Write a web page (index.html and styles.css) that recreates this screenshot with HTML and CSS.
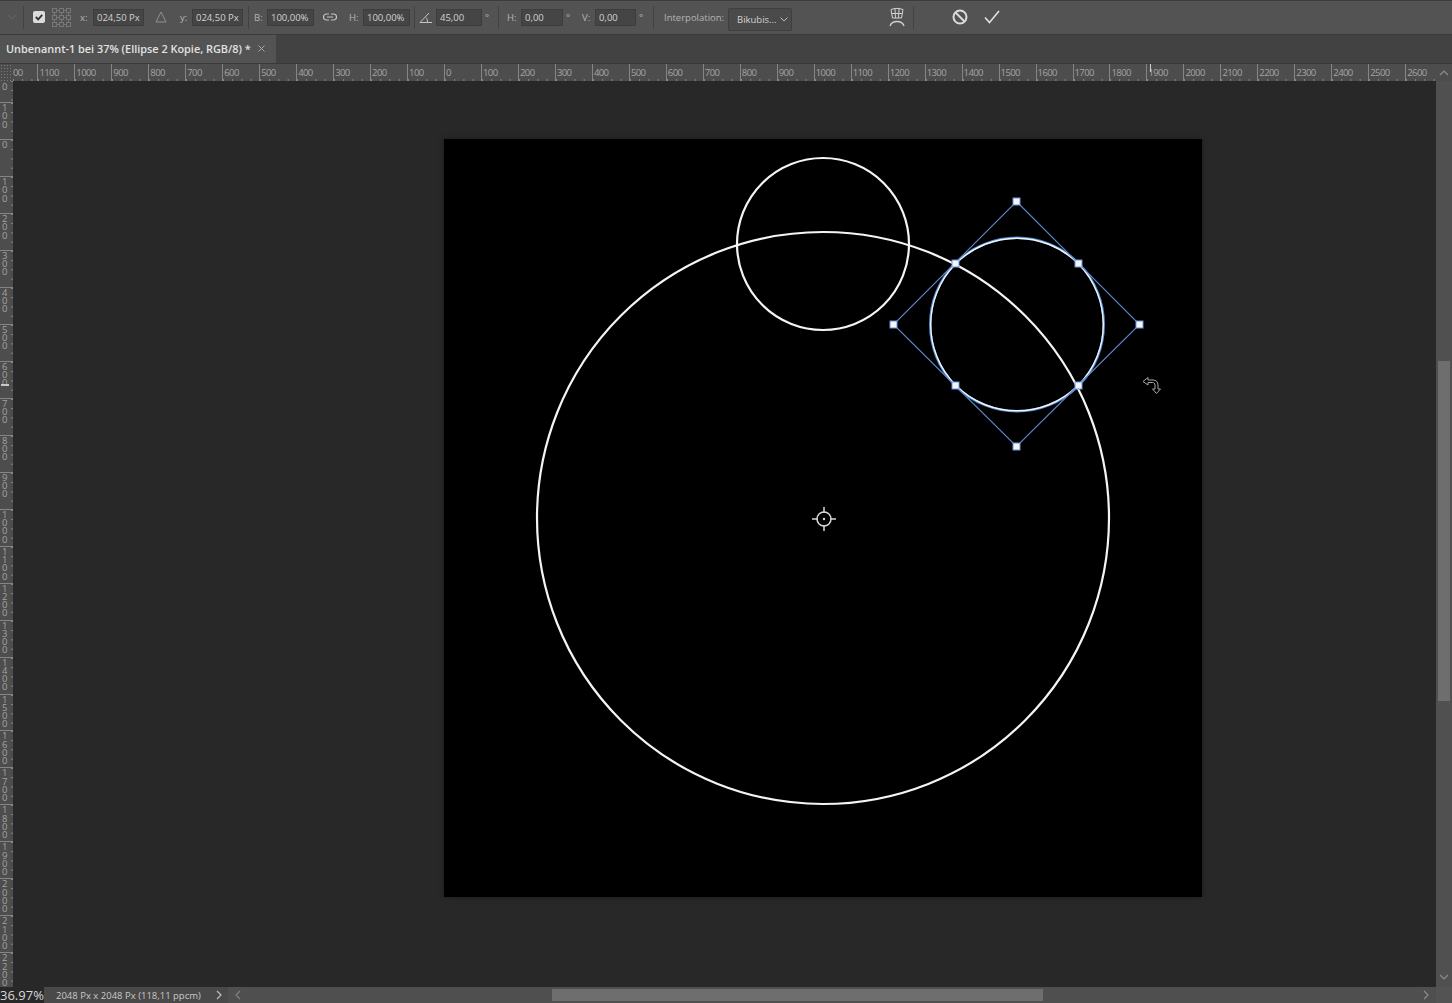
FILE: index.html
```html
<!DOCTYPE html>
<html lang="de">
<head>
  <meta charset="UTF-8">
  <title>Unbenannt-1 bei 37%</title>
  <link rel="stylesheet" href="styles.css">
</head>
<body>

  <div class="options">
    <svg class="icon ml-7" width="10" height="10" viewBox="0 0 10 10"><path d="M1 3l4 4 4-4" fill="none" stroke="#616161" stroke-width="1.2"/></svg>
    <span class="sep ml-6"></span>
    <svg class="icon ml-9" width="12" height="12" viewBox="0 0 12 12"><rect width="12" height="12" rx="2" fill="#dcdcdc"/><path d="M2.8 6l2.4 2.4 4-4.6" fill="none" stroke="#333" stroke-width="1.8"/></svg>
    <svg class="icon ml-7" width="19" height="19" viewBox="0 0 19 19" fill="none" stroke="#777">
      <rect x=".5" y=".5" width="4" height="4"/><rect x="7.5" y=".5" width="4" height="4"/><rect x="14.5" y=".5" width="4" height="4"/>
      <rect x=".5" y="7.5" width="4" height="4"/><rect x="7.5" y="7.5" width="4" height="4"/><rect x="14.5" y="7.5" width="4" height="4"/>
      <rect x=".5" y="14.5" width="4" height="4"/><rect x="7.5" y="14.5" width="4" height="4"/><rect x="14.5" y="14.5" width="4" height="4"/>
      <path d="M4.5 2.5h3M11.5 2.5h3M4.5 9.5h3M11.5 9.5h3M4.5 16.5h3M11.5 16.5h3M2.5 4.5v3M2.5 11.5v3M9.5 4.5v3M9.5 11.5v3M16.5 4.5v3M16.5 11.5v3"/>
    </svg>
    <span class="label ml-9 w-13">x:</span>
    <span class="field w-51">024,50 Px</span>
    <svg class="icon ml-11" width="12" height="12" viewBox="0 0 12 12"><path d="M6 1l5 10H1z" fill="none" stroke="#8f8f8f"/></svg>
    <span class="label ml-13 w-12">y:</span>
    <span class="field w-51">024,50 Px</span>
    <span class="sep ml-5"></span>
    <span class="label ml-5 w-13">B:</span>
    <span class="field w-47">100,00%</span>
    <svg class="icon ml-9" width="14" height="8" viewBox="0 0 14 8"><path d="M6 1H3.5a3 3 0 0 0 0 6H6M8 1h2.500a3 3 0 0 1 0 6H8M4 4h6" fill="none" stroke="#c4c4c4" stroke-width="1.2"/></svg>
    <span class="label ml-12 w-14">H:</span>
    <span class="field w-47">100,00%</span>
    <span class="sep ml-4"></span>
    <svg class="icon ml-4" width="13" height="11" viewBox="0 0 13 11"><path d="M13 10.500H1L10 1M7 5.500c1 1 1.500 3 1.500 5" fill="none" stroke="#c4c4c4"/></svg>
    <span class="field w-46 ml-4">45,00</span>
    <span class="deg ml-3">°</span>
    <span class="sep ml-7"></span>
    <span class="label ml-8 w-14">H:</span>
    <span class="field w-42">0,00</span>
    <span class="deg ml-3">°</span>
    <span class="label ml-10 w-13">V:</span>
    <span class="field w-41">0,00</span>
    <span class="deg ml-3">°</span>
    <span class="sep ml-8"></span>
    <span class="label ml-10 w-60">Interpolation:</span>
    <span class="select ml-4">Bikubis...
      <svg width="8" height="5" viewBox="0 0 8 5"><path d="M.5.500L4 4l3.500-3.500" fill="none" stroke="#bdbdbd"/></svg>
    </span>
    <svg class="icon ml-95" width="20" height="22" viewBox="0 0 20 22" fill="none" stroke="#d0d0d0">
      <path d="M4 3.500c4-1.500 8-1.500 12 0l-1.500 8.500h-9zM4.500 7.500h11M8 3l.5 9M12 3l-.5 9"/>
      <path d="M3 20c1-3 3.500-4.500 7-4.500s6 1.500 7 4.500" stroke-width="1.300"/>
    </svg>
    <span class="sep ml-6"></span>
    <svg class="icon ml-38" width="16" height="16" viewBox="0 0 16 16" fill="none" stroke="#dcdcdc" stroke-width="2"><circle cx="8" cy="8" r="6.500"/><path d="M3.500 3.500l9 9"/></svg>
    <svg class="icon ml-16" width="16" height="14" viewBox="0 0 16 14"><path d="M1 7.500l4.500 5L15 1" fill="none" stroke="#e0e0e0" stroke-width="1.600"/></svg>
  </div>

  <div class="tabs">
    <div class="tab">
      <span class="tab-title">Unbenannt-1 bei 37% (Ellipse 2 Kopie, RGB/8) *</span>
      <svg width="7" height="7" viewBox="0 0 7 7"><path d="M.5.500l6 6M6.500.500l-6 6" stroke="#a8a8a8"/></svg>
    </div>
  </div>

  <div class="ruler-top">
    <div class="corner"></div>
    <div class="hticks">
      <div class="hcell first">00</div>
      <div class="hcell">1100</div><div class="hcell">1000</div><div class="hcell">900</div><div class="hcell">800</div>
      <div class="hcell">700</div><div class="hcell">600</div><div class="hcell">500</div><div class="hcell">400</div>
      <div class="hcell">300</div><div class="hcell">200</div><div class="hcell">100</div><div class="hcell">0</div>
      <div class="hcell">100</div><div class="hcell">200</div><div class="hcell">300</div><div class="hcell">400</div>
      <div class="hcell">500</div><div class="hcell">600</div><div class="hcell">700</div><div class="hcell">800</div>
      <div class="hcell">900</div><div class="hcell">1000</div><div class="hcell">1100</div><div class="hcell">1200</div>
      <div class="hcell">1300</div><div class="hcell">1400</div><div class="hcell">1500</div><div class="hcell">1600</div>
      <div class="hcell">1700</div><div class="hcell">1800</div><div class="hcell">1900</div><div class="hcell">2000</div>
      <div class="hcell">2100</div><div class="hcell">2200</div><div class="hcell">2300</div><div class="hcell">2400</div>
      <div class="hcell">2500</div><div class="hcell">2600</div>
      <span class="marker-h"></span>
    </div>
    <div class="scroll-cap">
      <svg width="10" height="6" viewBox="0 0 10 6"><path d="M1 5l4-4 4 4" fill="none" stroke="#8c8c8c" stroke-width="1.200"/></svg>
    </div>
  </div>

  <div class="middle">
    <div class="vticks">
      <div class="vcell first">0</div>
      <div class="vcell">100</div><div class="vcell">0</div><div class="vcell">100</div><div class="vcell">200</div>
      <div class="vcell">300</div><div class="vcell">400</div><div class="vcell">500</div><div class="vcell">600</div>
      <div class="vcell">700</div><div class="vcell">800</div><div class="vcell">900</div><div class="vcell">1000</div>
      <div class="vcell">1100</div><div class="vcell">1200</div><div class="vcell">1300</div><div class="vcell">1400</div>
      <div class="vcell">1500</div><div class="vcell">1600</div><div class="vcell">1700</div><div class="vcell">1800</div>
      <div class="vcell">1900</div><div class="vcell">2000</div><div class="vcell">2100</div><div class="vcell">2200</div>
      <span class="marker-v"></span>
    </div>

    <div class="workspace">
      <div class="doc">
        <svg class="art" width="758" height="758" viewBox="0 0 758 758" fill="none">
          <circle cx="379" cy="379" r="286" stroke="#f4f4f4" stroke-width="2.200"/>
          <circle cx="379" cy="105" r="86" stroke="#f4f4f4" stroke-width="2.200"/>
          <circle cx="573" cy="185.500" r="86.800" stroke="#4f8bd6" stroke-width="2.400"/>
          <circle cx="573" cy="185.500" r="86.300" stroke="#f4f4f4" stroke-width="1.400"/>
          <path d="M572.500 62.500L695.500 185.500 572.500 307.500 449.500 185.500z" stroke="#5f88cc" stroke-width="1.100"/>
          <g fill="#f2f6ff" stroke="#6f92d6">
            <rect x="569" y="59" width="7" height="7"/>
            <rect x="692" y="182" width="7" height="7"/>
            <rect x="569" y="304" width="7" height="7"/>
            <rect x="446" y="182" width="7" height="7"/>
            <rect x="508" y="121" width="7" height="7"/>
            <rect x="631" y="121" width="7" height="7"/>
            <rect x="631" y="243" width="7" height="7"/>
            <rect x="508" y="243" width="7" height="7"/>
          </g>
          <g stroke="#d8d8d8" stroke-width="1.500">
            <circle cx="380" cy="380" r="7"/>
            <path d="M380 368v6M380 386v6M368 380h6M386 380h6"/>
          </g>
          <circle cx="380" cy="380" r="1.200" fill="#d8d8d8"/>
          <path d="M699 242.500l5-4v2.500h5c3 0 5 2 5 5v4h2.500l-4 4.500-4-4.500h2.500v-4c0-1.500-1-2.500-2.500-2.500h-4.500v2.500z" stroke="#a8a8a8" stroke-width="1" fill="#000"/>
        </svg>
      </div>
    </div>

    <div class="scroll-v">
      <div class="thumb-v"></div>
      <svg width="10" height="6" viewBox="0 0 10 6"><path d="M1 1l4 4 4-4" fill="none" stroke="#8c8c8c" stroke-width="1.200"/></svg>
    </div>
  </div>

  <div class="status">
    <div class="zoom-level">36.97%</div>
    <div class="doc-info">
      <span>2048 Px x 2048 Px (118,11 ppcm)</span>
      <svg width="6" height="10" viewBox="0 0 6 10"><path d="M1 1l4 4-4 4" fill="none" stroke="#bdbdbd" stroke-width="1.200"/></svg>
    </div>
    <div class="scroll-h">
      <svg width="6" height="10" viewBox="0 0 6 10"><path d="M5 1L1 5l4 4" fill="none" stroke="#808080" stroke-width="1.200"/></svg>
      <div class="thumb-h"></div>
      <svg class="arrow-end" width="6" height="10" viewBox="0 0 6 10"><path d="M1 1l4 4-4 4" fill="none" stroke="#8c8c8c" stroke-width="1.200"/></svg>
    </div>
    <div class="status-cap"></div>
  </div>

</body>
</html>
```

FILE: styles.css
```css
body {
  font-family: "Open Sans", sans-serif;
  margin: 0;
  width: 1452px;
  height: 1003px;
  overflow: hidden;
  background-color: #282828;
  color: #c8c8c8;
  display: flex;
  flex-direction: column;
}

/* options bar */
.options {
  display: flex;
  align-items: center;
  box-sizing: border-box;
  height: 35px;
  padding-bottom: 1px;
  background-color: #535353;
  border-top: 1px solid #3c3c3c;
  border-bottom: 1px solid #3b3b3b;
  flex: none;
  font-size: 9.500px;
}

.icon {
  flex: none;
}

.sep {
  flex: none;
  width: 1px;
  height: 23px;
  background-color: #424242;
}

.label {
  flex: none;
  color: #b4b4b4;
  white-space: nowrap;
}

.field {
  flex: none;
  box-sizing: border-box;
  height: 17px;
  line-height: 15px;
  padding-left: 3px;
  background-color: #454545;
  border: 1px solid #3d3d3d;
  color: #d2d2d2;
  white-space: nowrap;
  overflow: hidden;
}

.deg {
  flex: none;
  width: 6px;
  color: #bcbcbc;
}

.select {
  flex: none;
  box-sizing: border-box;
  display: flex;
  align-items: center;
  justify-content: space-between;
  width: 64px;
  height: 23px;
  margin-top: 5px;
  padding: 0 3px 0 8px;
  background-color: #4a4a4a;
  border: 1px solid #3f3f3f;
  border-radius: 2px;
  color: #d2d2d2;
}

.ml-3 { margin-left: 3px; }
.ml-4 { margin-left: 4px; }
.ml-5 { margin-left: 5px; }
.ml-6 { margin-left: 6px; }
.ml-7 { margin-left: 7px; }
.ml-8 { margin-left: 8px; }
.ml-9 { margin-left: 9px; }
.ml-10 { margin-left: 10px; }
.ml-11 { margin-left: 11px; }
.ml-12 { margin-left: 12px; }
.ml-13 { margin-left: 13px; }
.ml-16 { margin-left: 16px; }
.ml-38 { margin-left: 38px; }
.ml-95 { margin-left: 95px; }
.w-12 { width: 12px; }
.w-13 { width: 13px; }
.w-14 { width: 14px; }
.w-41 { width: 41px; }
.w-42 { width: 42px; }
.w-46 { width: 46px; }
.w-47 { width: 47px; }
.w-51 { width: 51px; }
.w-60 { width: 60px; }

/* document tabs */
.tabs {
  flex: none;
  height: 28px;
  background-color: #424242;
  border-bottom: 1px solid #393939;
}

.tab {
  display: flex;
  align-items: center;
  gap: 7px;
  box-sizing: border-box;
  width: 276px;
  height: 28px;
  padding: 0 0 2px 6px;
  background-color: #535353;
}

.tab-title {
  font-size: 10.900px;
  font-weight: 600;
  color: #e2e2e2;
  white-space: nowrap;
}

/* rulers */
.ruler-top {
  flex: none;
  display: flex;
  height: 17px;
  background-color: #4d4d4d;
}

.corner {
  flex: none;
  width: 13px;
  background-image: radial-gradient(#7a7a7a 0.6px, transparent 0.8px);
  background-size: 3px 3px;
}

.hticks {
  position: relative;
  display: flex;
  width: 1423px;
  overflow: hidden;
}

.hcell {
  flex: none;
  box-sizing: border-box;
  width: 36.97px;
  padding-left: 1px;
  border-left: 1px solid #858585;
  font-size: 9.500px;
  letter-spacing: -0.6px;
  line-height: 18px;
  color: #a4a4a4;
  background-image: linear-gradient(to right, #8a8a8a 1px, transparent 1px);
  background-size: 9.24px 2px;
  background-repeat: repeat-x;
  background-position: left bottom;
}

.hcell.first {
  width: 24.400px;
  padding-left: 0;
  border-left: none;
}

.marker-h {
  position: absolute;
  left: 1137px;
  top: 0;
  width: 1px;
  height: 8px;
  background-color: #d0d0d0;
}

.scroll-cap {
  flex: none;
  display: flex;
  align-items: center;
  justify-content: center;
  width: 16px;
}

.middle {
  flex: none;
  display: flex;
  height: 906px;
}

.vticks {
  position: relative;
  flex: none;
  width: 13px;
  overflow: hidden;
  background-color: #4d4d4d;
}

.vcell {
  box-sizing: border-box;
  height: 36.97px;
  padding: 1px 4px 0 2px;
  border-top: 1px solid #858585;
  font-size: 9.500px;
  line-height: 8.300px;
  color: #a4a4a4;
  word-break: break-all;
  background-image: linear-gradient(to bottom, #8a8a8a 1px, transparent 1px);
  background-size: 2px 9.24px;
  background-repeat: repeat-y;
  background-position: right top;
}

.vcell.first {
  height: 21px;
  padding-top: 2px;
  border-top: none;
}

.marker-v {
  position: absolute;
  left: 1px;
  top: 303px;
  width: 8px;
  height: 2px;
  background-color: #c8c8c8;
}

.workspace {
  flex: 1;
  padding: 58px 0 0 431px;
  background-color: #282828;
}

.doc {
  width: 758px;
  height: 758px;
  background-color: #000;
  box-shadow: 0 0 6px rgba(0, 0, 0, 0.35);
}

.art {
  display: block;
}

.scroll-v {
  flex: none;
  box-sizing: border-box;
  display: flex;
  flex-direction: column;
  align-items: center;
  width: 16px;
  padding: 280px 0 7px;
  background-color: #505050;
}

.thumb-v {
  width: 12px;
  height: 340px;
  margin-bottom: auto;
  background-color: #6e6e6e;
}

/* status bar */
.status {
  flex: none;
  display: flex;
  height: 16px;
}

.zoom-level {
  flex: none;
  width: 44px;
  font-size: 13px;
  line-height: 17px;
  color: #d8d8d8;
  white-space: nowrap;
}

.doc-info {
  flex: none;
  box-sizing: border-box;
  display: flex;
  align-items: center;
  justify-content: space-between;
  width: 184px;
  padding: 0 6px 0 12px;
  background-color: #494949;
  font-size: 9.500px;
  color: #c8c8c8;
}

.scroll-h {
  flex: 1;
  display: flex;
  align-items: center;
  padding: 0 7px;
  background-color: #4f4f4f;
}

.thumb-h {
  width: 491px;
  height: 12px;
  margin-left: 311px;
  background-color: #6e6e6e;
}

.arrow-end {
  margin-left: auto;
}

.status-cap {
  flex: none;
  width: 16px;
  background-color: #535353;
}
```
